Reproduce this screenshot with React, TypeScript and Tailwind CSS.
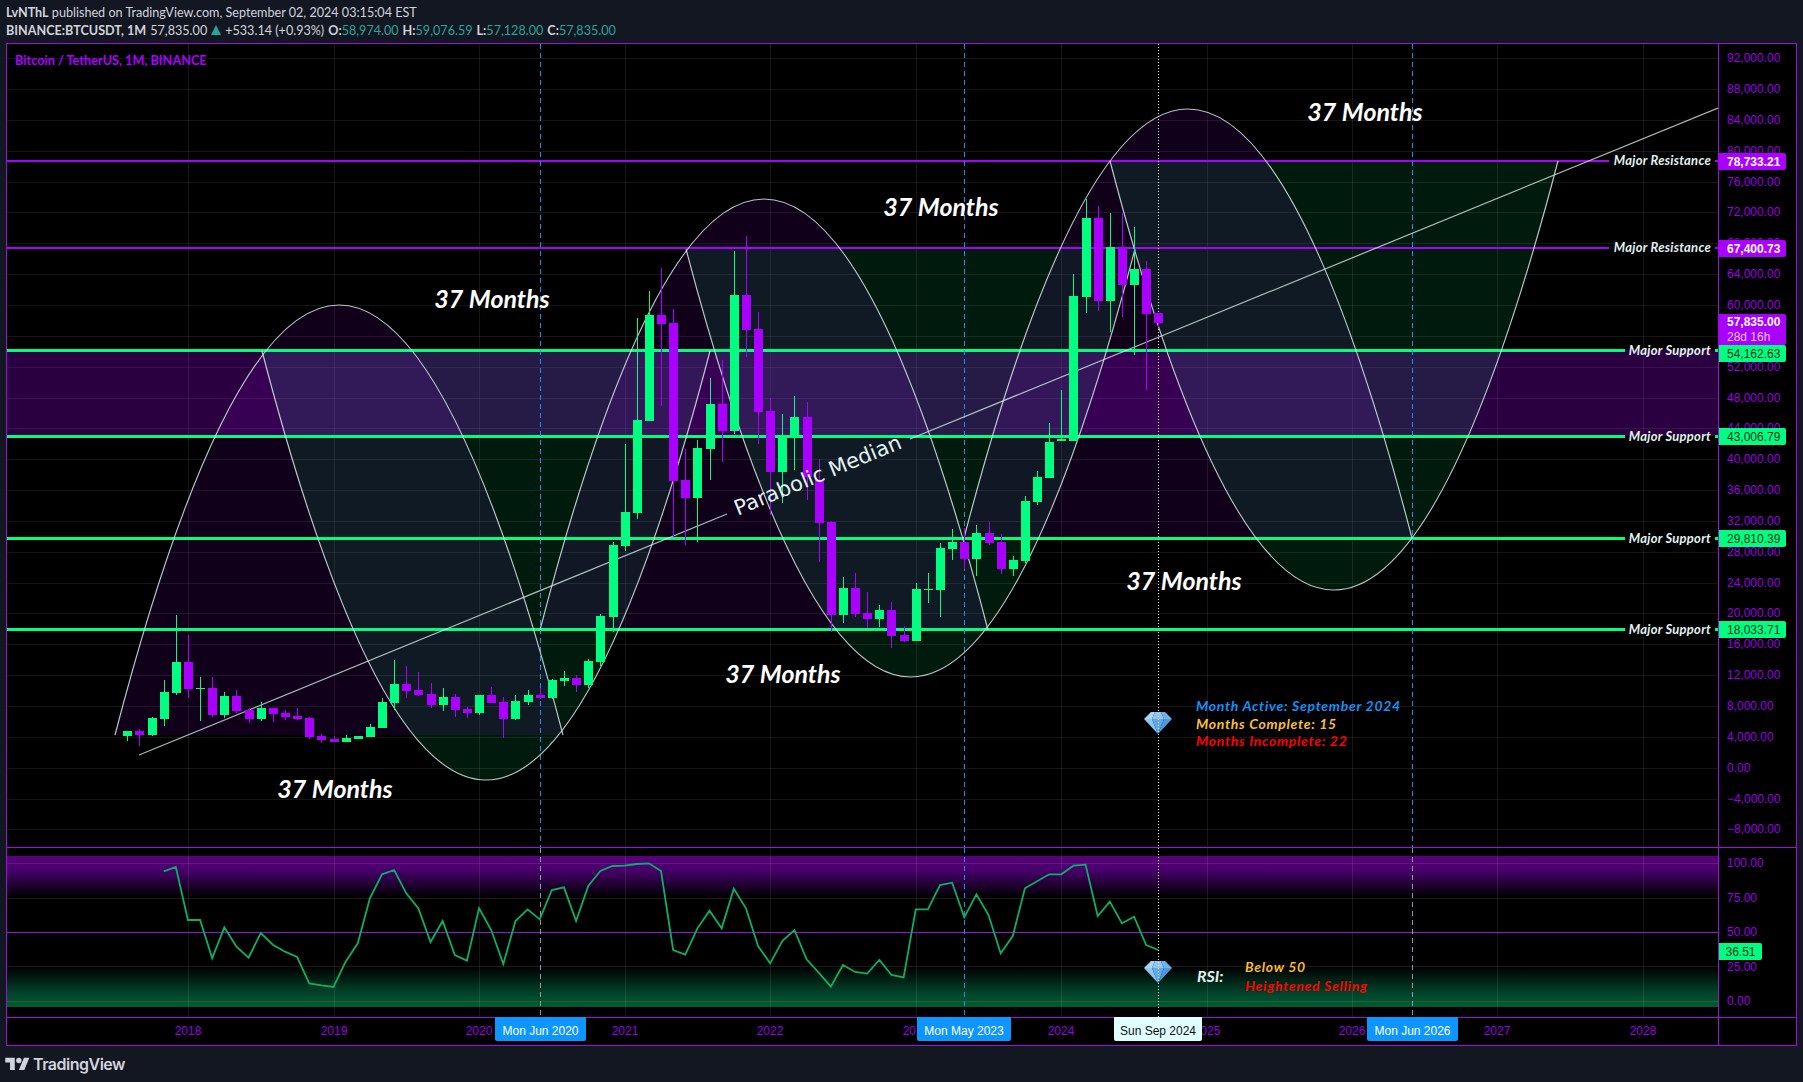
import React from 'react';

const PURPLE = '#aa00ff';
const GREEN = '#00ff80';

const priceY = (v: number) => 767.7 - v * 0.0077125;
const barX = (i: number) => Math.round(127.3 + i * 12.13);

// wick top, body top, body bottom, wick bottom, up?
const candles: [number, number, number, number, number][] = [
  [731, 731, 736, 741, 1], [729, 731, 735, 746, 0], [717, 718, 735, 736, 1], [680, 692, 719, 726, 1],
  [615, 662, 693, 695, 1], [635, 662, 689, 698, 0], [677, 688, 689, 721, 1], [677, 688, 715, 717, 0],
  [692, 696, 715, 718, 1], [690, 696, 711, 713, 0], [708, 710, 719, 723, 0], [702, 708, 719, 721, 1],
  [708, 708, 714, 722, 0], [710, 713, 717, 720, 0], [708, 716, 719, 720, 0], [717, 718, 737, 739, 0],
  [734, 736, 740, 743, 0], [736, 739, 742, 742, 0], [735, 738, 742, 742, 1], [736, 736, 739, 739, 1],
  [724, 727, 737, 737, 1], [698, 702, 728, 728, 1], [660, 684, 703, 710, 1], [666, 684, 691, 698, 0],
  [672, 690, 695, 696, 0], [683, 694, 705, 708, 0], [688, 697, 705, 711, 1], [694, 697, 710, 717, 0],
  [707, 709, 713, 718, 0], [695, 695, 713, 715, 1], [687, 695, 703, 703, 0], [697, 702, 719, 738, 0],
  [695, 701, 719, 720, 1], [690, 695, 702, 705, 1], [688, 695, 698, 699, 0], [679, 680, 698, 699, 1],
  [671, 678, 681, 686, 1], [675, 678, 685, 692, 0], [659, 661, 685, 688, 1], [614, 616, 662, 666, 1],
  [542, 545, 617, 632, 1], [444, 512, 546, 551, 1], [318, 420, 513, 519, 1], [291, 315, 421, 421, 1],
  [268, 315, 324, 406, 0], [309, 323, 481, 537, 0], [449, 480, 498, 545, 0], [440, 448, 498, 542, 1],
  [378, 404, 449, 480, 1], [360, 404, 431, 462, 0], [251, 295, 431, 434, 1], [236, 295, 330, 357, 0],
  [312, 329, 412, 444, 0], [398, 411, 472, 515, 0], [414, 436, 472, 503, 1], [396, 417, 436, 470, 1],
  [402, 417, 477, 500, 0], [459, 480, 523, 562, 0], [521, 522, 615, 632, 0], [577, 588, 615, 623, 1],
  [573, 588, 614, 617, 0], [592, 613, 619, 628, 0], [605, 610, 619, 627, 1], [602, 610, 636, 648, 0],
  [626, 635, 641, 642, 0], [583, 589, 641, 641, 1], [573, 589, 590, 603, 1], [543, 548, 590, 617, 1],
  [529, 542, 549, 560, 1], [528, 542, 559, 569, 0], [525, 533, 559, 576, 1], [522, 533, 543, 545, 0],
  [534, 542, 569, 574, 0], [556, 560, 569, 576, 1], [496, 501, 561, 563, 1], [471, 477, 502, 505, 1],
  [423, 442, 478, 478, 1], [390, 439, 441, 441, 1], [274, 296, 441, 441, 1], [199, 218, 297, 313, 1],
  [206, 218, 301, 311, 0], [213, 247, 301, 332, 1], [213, 248, 285, 317, 0], [227, 269, 285, 355, 1],
  [261, 269, 314, 390, 0], [313, 313, 323, 327, 0],
];

// x0, foot y, vertex x, vertex y, x1
const arcs: [number, number, number, number, number, string][] = [
  [115, 735, 339, 305, 563, PURPLE],
  [262, 351, 486, 780, 710, GREEN],
  [540, 630, 764, 199, 988, PURPLE],
  [686, 249, 911, 677, 1135, GREEN],
  [964, 538, 1188, 109, 1412, PURPLE],
  [1110, 161, 1334, 590, 1558, GREEN],
];

const levels = [
  { label: 'Major Resistance', price: '78,733.21', y: 160, h: 2, end: 1609, color: PURPLE, tag: 153 },
  { label: 'Major Resistance', price: '67,400.73', y: 247, h: 2, end: 1609, color: PURPLE, tag: 240 },
  { label: 'Major Support', price: '54,162.63', y: 349, h: 3, end: 1625, color: GREEN, tag: 345 },
  { label: 'Major Support', price: '43,006.79', y: 435, h: 3, end: 1625, color: GREEN, tag: 428 },
  { label: 'Major Support', price: '29,810.39', y: 537, h: 3, end: 1625, color: GREEN, tag: 530 },
  { label: 'Major Support', price: '18,033.71', y: 628, h: 3, end: 1625, color: GREEN, tag: 621 },
];

const ticks = Array.from({ length: 26 }, (_, i) => 92000 - i * 4000);
const yearLines = [188, 334, 479, 625, 770, 916, 1061, 1207, 1352, 1497, 1643];
const years = ['2018', '2019', '2020', '2021', '2022', '2023', '2024', '2025', '2026', '2027', '2028'];

const months = [
  { x: 492, y: 299 }, { x: 335, y: 789 }, { x: 783, y: 674 },
  { x: 941, y: 207 }, { x: 1184, y: 581 }, { x: 1365, y: 112 },
];

const rsiRaw: [number, number][] = [
  [3, 94], [4, 81], [5, 240], [6, 240], [7, 355], [8, 262], [9, 320], [10, 353], [11, 279], [12, 314],
  [13, 335], [14, 351], [15, 430], [16, 436], [17, 441], [18, 365], [19, 310], [20, 175], [21, 103], [22, 90],
  [23, 160], [24, 205], [25, 306], [26, 243], [27, 345], [28, 362], [29, 205], [30, 270], [31, 372], [32, 243],
  [33, 208], [34, 238], [35, 150], [36, 142], [37, 243], [38, 138], [39, 93], [40, 78], [41, 77], [42, 72],
  [43, 70], [44, 93], [45, 330], [46, 344], [47, 265], [48, 212], [49, 265], [50, 146], [51, 205], [52, 318],
  [53, 370], [54, 303], [55, 270], [56, 358], [57, 398], [58, 440], [59, 375], [60, 396], [61, 401], [62, 360],
  [63, 405], [64, 412], [65, 208], [66, 208], [67, 135], [68, 128], [69, 232], [70, 163], [71, 225], [72, 340],
  [73, 288], [74, 145], [75, 124], [76, 103], [77, 103], [78, 77], [79, 74], [80, 228], [81, 185], [82, 250],
  [83, 230], [84, 315], [85, 330],
];
const rsiPoints = rsiRaw.map(([i, y]) => `${127.3 + i * 12.13},${840 + y / 3}`).join(' ');

function Diamond({ x, y }: { x: number; y: number }) {
  return (
    <g transform={`translate(${x} ${y})`}>
      <polygon points="0,7 7,0 11,0 8,7" fill="#a9d6f7" />
      <polygon points="8,7 11,0 17,0 20,7" fill="#8cc6f3" />
      <polygon points="20,7 17,0 21,0 28,7" fill="#6fb2ec" />
      <polygon points="0,7 8,7 14,22" fill="#8cc6f3" />
      <polygon points="8,7 20,7 14,22" fill="#5fa8ea" />
      <polygon points="20,7 28,7 14,22" fill="#4f97de" />
    </g>
  );
}

function MainChart() {
  return (
    <svg className="absolute inset-0" width={1711} height={803} viewBox="7 44 1711 803">
      {ticks.map((t) => (
        <line key={t} x1={7} x2={1718} y1={Math.round(priceY(t)) + 0.5} y2={Math.round(priceY(t)) + 0.5} stroke="#fff" strokeOpacity={0.085} />
      ))}
      {yearLines.map((x) => (
        <line key={x} x1={x + 0.5} x2={x + 0.5} y1={44} y2={847} stroke="#fff" strokeOpacity={0.085} />
      ))}
      <rect x={7} y={350} width={1711} height={86} fill={PURPLE} fillOpacity={0.25} />
      {arcs.map(([x0, y0, vx, vy, x1, color]) => (
        <path key={x0} d={`M${x0} ${y0} Q${vx} ${2 * vy - y0} ${x1} ${y0} Z`} fill={color} fillOpacity={0.1} />
      ))}
      {levels.map((l) => (
        <g key={l.y} fill={l.color}>
          <rect x={7} y={l.y} width={l.end - 7} height={l.h} />
          <rect x={1715} y={l.y} width={3} height={l.h} />
        </g>
      ))}
      {[540, 964, 1412].map((x) => (
        <line key={x} x1={x + 0.5} x2={x + 0.5} y1={44} y2={847} stroke="#1590f5" strokeDasharray="5 4" />
      ))}
      {arcs.map(([x0, y0, vx, vy, x1]) => (
        <path key={x0} d={`M${x0} ${y0} Q${vx} ${2 * vy - y0} ${x1} ${y0}`} fill="none" stroke="#d3e8e6" strokeOpacity={0.85} strokeWidth={1.2} />
      ))}
      <line x1={139} y1={755} x2={727} y2={514} stroke="#d3e8e6" strokeOpacity={0.8} strokeWidth={1.2} />
      <line x1={910} y1={439} x2={1718} y2={108} stroke="#d3e8e6" strokeOpacity={0.8} strokeWidth={1.2} />
      <Diamond x={1144} y={712} />
      <line x1={1158.5} x2={1158.5} y1={44} y2={847} stroke="#fff" strokeDasharray="1 2" />
      {candles.map(([wt, bt, bb, wb, up], i) => {
        const cx = barX(i);
        const c = up ? GREEN : PURPLE;
        return (
          <g key={i} fill={c}>
            <rect x={cx} y={wt} width={1} height={wb - wt} />
            <rect x={cx - 4} y={bt} width={9} height={Math.max(bb - bt, 1)} />
          </g>
        );
      })}
    </svg>
  );
}

function RsiChart() {
  return (
    <svg className="absolute inset-0" width={1711} height={169} viewBox="7 848 1711 169">
      <defs>
        <linearGradient id="rsiTop" x1="0" x2="0" y1="0" y2="1">
          <stop offset="0" stopColor="#5a007e" />
          <stop offset="0.35" stopColor="#47006a" />
          <stop offset="1" stopColor="#000" />
        </linearGradient>
        <linearGradient id="rsiBottom" x1="0" x2="0" y1="0" y2="1">
          <stop offset="0" stopColor="#000" />
          <stop offset="0.65" stopColor="#00432a" />
          <stop offset="1" stopColor="#005c30" />
        </linearGradient>
      </defs>
      <rect x={7} y={856} width={1711} height={41} fill="url(#rsiTop)" />
      <rect x={7} y={967} width={1711} height={40} fill="url(#rsiBottom)" />
      {[863.5, 898.5, 966.5, 1001.5].map((y) => (
        <line key={y} x1={7} x2={1718} y1={y} y2={y} stroke="#fff" strokeOpacity={0.1} />
      ))}
      {yearLines.map((x) => (
        <line key={x} x1={x + 0.5} x2={x + 0.5} y1={848} y2={1017} stroke="#fff" strokeOpacity={0.085} />
      ))}
      <line x1={7} x2={1718} y1={932.5} y2={932.5} stroke="#9c0fdd" />
      <line x1={540.5} x2={540.5} y1={848} y2={1017} stroke="#8a9aa8" strokeDasharray="5 4" />
      <line x1={964.5} x2={964.5} y1={848} y2={1017} stroke="#1590f5" strokeDasharray="5 4" />
      <line x1={1412.5} x2={1412.5} y1={848} y2={1017} stroke="#8a9aa8" strokeDasharray="5 4" />
      <polyline points={rsiPoints} fill="none" stroke="#0cae68" strokeWidth={1.8} />
      <Diamond x={1144} y={961} />
      <line x1={1158.5} x2={1158.5} y1={848} y2={1017} stroke="#fff" strokeDasharray="1 2" />
    </svg>
  );
}

export default function App() {
  return (
    <div className="flex h-[1082px] w-[1803px] flex-col overflow-hidden bg-[#131722] font-['Liberation_Sans',sans-serif] text-[#d1d4dc]">
      <header className="h-[43px] px-[6px] pt-[4px] font-[Lato,sans-serif] text-[12.6px] leading-[17.5px]">
        <div>
          <b>LvNThL</b> published on TradingView.com, September 02, 2024 03:15:04 EST
        </div>
        <div className="flex items-center gap-[4px] whitespace-nowrap">
          <b>BINANCE:BTCUSDT, 1M</b>
          <span>57,835.00</span>
          <svg width="10" height="10" viewBox="0 0 10 10">
            <polygon points="5,0 10,10 0,10" fill="#26a69a" />
          </svg>
          <span>+533.14 (+0.93%)</span>
          <span><b>O:</b><span className="text-[#26a69a]">58,974.00</span></span>
          <span><b>H:</b><span className="text-[#26a69a]">59,076.59</span></span>
          <span><b>L:</b><span className="text-[#26a69a]">57,128.00</span></span>
          <span><b>C:</b><span className="text-[#26a69a]">57,835.00</span></span>
        </div>
      </header>

      <div className="ml-[6px] grid h-[1003px] w-[1791px] grid-cols-[1712px_77px] grid-rows-[804px_170px_27px] border border-[#9c0fdd] bg-black">
        <div className="relative overflow-hidden border-r border-b border-[#9c0fdd]">
          <MainChart />
          <span className="absolute top-[8px] left-[8px] font-[Lato,sans-serif] text-[12.7px] font-bold leading-[16px] text-[#aa00ff]">
            Bitcoin / TetherUS, 1M, BINANCE
          </span>
          {months.map((m) => (
            <span
              key={m.x}
              className="absolute -translate-x-1/2 -translate-y-1/2 whitespace-nowrap font-[Lato,sans-serif] text-[25px] font-bold italic text-white"
              style={{ left: m.x - 7, top: m.y - 44 }}
            >
              37 Months
            </span>
          ))}
          {levels.map((l) => (
            <span
              key={l.y}
              className="absolute right-[7px] -translate-y-1/2 whitespace-nowrap font-[Lato,sans-serif] text-[13px] font-bold italic tracking-[0.25px] text-[#e0f2f1]"
              style={{ top: l.y + l.h / 2 - 44 }}
            >
              {l.label}
            </span>
          ))}
          <span className="absolute top-[432px] left-[811px] -translate-x-1/2 -translate-y-1/2 -rotate-[22.3deg] whitespace-nowrap font-['DejaVu_Sans',sans-serif] text-[21px] text-[#e0f2f1]">
            Parabolic Median
          </span>
          <div className="absolute top-[653px] left-[1189px] font-[Lato,sans-serif] text-[14px] leading-[17.5px] font-bold italic tracking-[0.7px]">
            <div className="text-[#1590f5]">Month Active: September 2024</div>
            <div className="text-[#fbc02d]">Months Complete: 15</div>
            <div className="text-[#ff0000]">Months Incomplete: 22</div>
          </div>
        </div>

        <div className="relative border-b border-[#9c0fdd] text-[12px] text-[#9a00e0]">
          {ticks.map((t) => (
            <span
              key={t}
              className="absolute left-[8px] -translate-y-1/2 whitespace-nowrap"
              style={{ top: priceY(t) - 44 }}
            >
              {t.toLocaleString('en-US', { minimumFractionDigits: 2 }).replace('-', '\u2212')}
            </span>
          ))}
          {levels.map((l) => (
            <span
              key={l.y}
              className={
                l.color === PURPLE
                  ? 'absolute left-0 flex h-[17px] w-[67px] items-center rounded-r-[2px] bg-[#aa00ff] pl-[8px] font-bold text-white'
                  : 'absolute left-0 flex h-[17px] w-[67px] items-center rounded-r-[2px] bg-[#00ff80] pl-[8px] text-[#06321c]'
              }
              style={{ top: l.tag - 44 }}
            >
              {l.price}
            </span>
          ))}
          <div className="absolute top-[270px] left-0 flex h-[31px] w-[67px] flex-col justify-center rounded-r-[2px] bg-[#aa00ff] pl-[8px] leading-[15px] text-white">
            <span className="font-bold">57,835.00</span>
            <span className="text-[#e8c4ff]">28d 16h</span>
          </div>
        </div>

        <div className="relative overflow-hidden border-r border-b border-[#9c0fdd]">
          <RsiChart />
          <span className="absolute top-[119px] left-[1190px] font-[Lato,sans-serif] text-[16px] font-bold italic leading-[18px] text-[#e0f2f1]">
            RSI:
          </span>
          <div className="absolute top-[109px] left-[1238px] font-[Lato,sans-serif] text-[14px] leading-[19px] font-bold italic tracking-[0.7px]">
            <div className="text-[#fbb82e]">Below 50</div>
            <div className="text-[#ff0000]">Heightened Selling</div>
          </div>
        </div>

        <div className="relative border-b border-[#9c0fdd] text-[12px] text-[#9a00e0]">
          {[100, 75, 50, 25, 0].map((v) => (
            <span
              key={v}
              className="absolute left-[8px] -translate-y-1/2"
              style={{ top: 1001 - v * 1.38 - 848 }}
            >
              {v.toFixed(2)}
            </span>
          ))}
          <span className="absolute top-[95px] left-0 flex h-[17px] w-[43px] items-center justify-center rounded-r-[2px] bg-[#00ff80] text-[#06321c]">
            36.51
          </span>
        </div>

        <div className="relative border-r border-[#9c0fdd] text-[12px]">
          {years.map((y, i) => (
            <span
              key={y}
              className="absolute top-[13px] -translate-x-1/2 -translate-y-1/2 text-[#9a00e0]"
              style={{ left: yearLines[i] - 7 }}
            >
              {y}
            </span>
          ))}
          <span className="absolute -top-px left-[488px] flex h-[24px] w-[91px] items-center justify-center rounded-b-[2px] bg-[#0d96ff] pt-[4px] text-white">
            Mon Jun 2020
          </span>
          <span className="absolute -top-px left-[910px] flex h-[24px] w-[94px] items-center justify-center rounded-b-[2px] bg-[#0d96ff] pt-[4px] text-white">
            Mon May 2023
          </span>
          <span className="absolute -top-px left-[1107px] flex h-[24px] w-[88px] items-center justify-center rounded-b-[2px] bg-[#e0ffff] pt-[4px] text-[#111]">
            Sun Sep 2024
          </span>
          <span className="absolute -top-px left-[1360px] flex h-[24px] w-[91px] items-center justify-center rounded-b-[2px] bg-[#0d96ff] pt-[4px] text-white">
            Mon Jun 2026
          </span>
        </div>
        <div />
      </div>

      <footer className="flex flex-1 items-center gap-[3px] px-[5px] text-[#d1d4dc]">
        <svg width="25" height="19" viewBox="0 0 36 28" fill="currentColor">
          <path d="M14 22H7V11H0V4h14v18zM28 22h-8l7.5-18h8L28 22z" />
          <circle cx="20" cy="8" r="4" />
        </svg>
        <span className="font-[Inter,sans-serif] text-[16px] font-semibold tracking-[-0.5px]">TradingView</span>
      </footer>
    </div>
  );
}
